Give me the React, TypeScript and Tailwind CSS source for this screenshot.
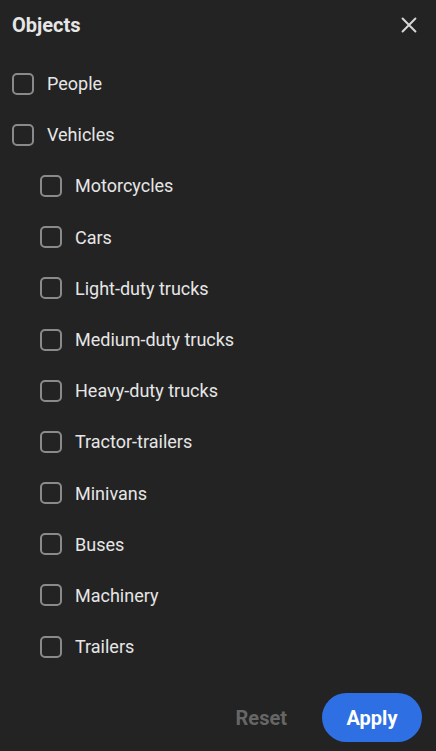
import { useState } from "react";

const children = [
  "Motorcycles",
  "Cars",
  "Light-duty trucks",
  "Medium-duty trucks",
  "Heavy-duty trucks",
  "Tractor-trailers",
  "Minivans",
  "Buses",
  "Machinery",
  "Trailers",
];

function Row({ label, nested, checked, onToggle }: { label: string; nested?: boolean; checked: boolean; onToggle: () => void }) {
  return (
    <button
      type="button"
      onClick={onToggle}
      className={`flex h-[51.2px] w-full items-center text-left ${nested ? "pl-[40px]" : "pl-[12px]"}`}
    >
      <span
        className={`flex h-[22px] w-[22px] shrink-0 items-center justify-center rounded-[5px] border-2 ${
          checked ? "border-[#2f6fe4] bg-[#2f6fe4]" : "border-[#8a8a8a]"
        }`}
      >
        {checked && (
          <svg viewBox="0 0 24 24" className="h-4 w-4" fill="none" stroke="#fff" strokeWidth="3">
            <path d="M5 12.5l4.5 4.5L19 7.5" />
          </svg>
        )}
      </span>
      <span className="ml-[13px] text-[18px] font-normal text-[#e6e6e6]">{label}</span>
    </button>
  );
}

export default function App() {
  const [sel, setSel] = useState<Record<string, boolean>>({});
  const toggle = (k: string) => setSel((s) => ({ ...s, [k]: !s[k] }));

  return (
    <div className="flex h-[751px] w-full flex-col bg-[#232323] font-['Roboto',sans-serif]">
      <div className="flex h-[50px] items-center justify-between pl-[12px] pr-[16px]">
        <h2 className="text-[20px] font-bold text-[#e6e6e6]">Objects</h2>
        <svg viewBox="0 0 24 24" className="h-[22px] w-[22px]" fill="none" stroke="#d6d6d6" strokeWidth="2.2" strokeLinecap="round">
          <path d="M5 5l14 14M19 5L5 19" />
        </svg>
      </div>

      <div className="mt-[8px] flex flex-col">
        <Row label="People" checked={!!sel.People} onToggle={() => toggle("People")} />
        <Row label="Vehicles" checked={!!sel.Vehicles} onToggle={() => toggle("Vehicles")} />
        {children.map((c) => (
          <Row key={c} label={c} nested checked={!!sel[c]} onToggle={() => toggle(c)} />
        ))}
      </div>

      <div className="mt-[21px] flex items-center justify-end gap-[35px] pr-[14px]">
        <button type="button" className="text-[20px] font-bold text-[#666666]">
          Reset
        </button>
        <button
          type="button"
          className="h-[49px] w-[100px] rounded-full bg-[#2f6fe4] text-[20px] font-bold text-white"
        >
          Apply
        </button>
      </div>
    </div>
  );
}
